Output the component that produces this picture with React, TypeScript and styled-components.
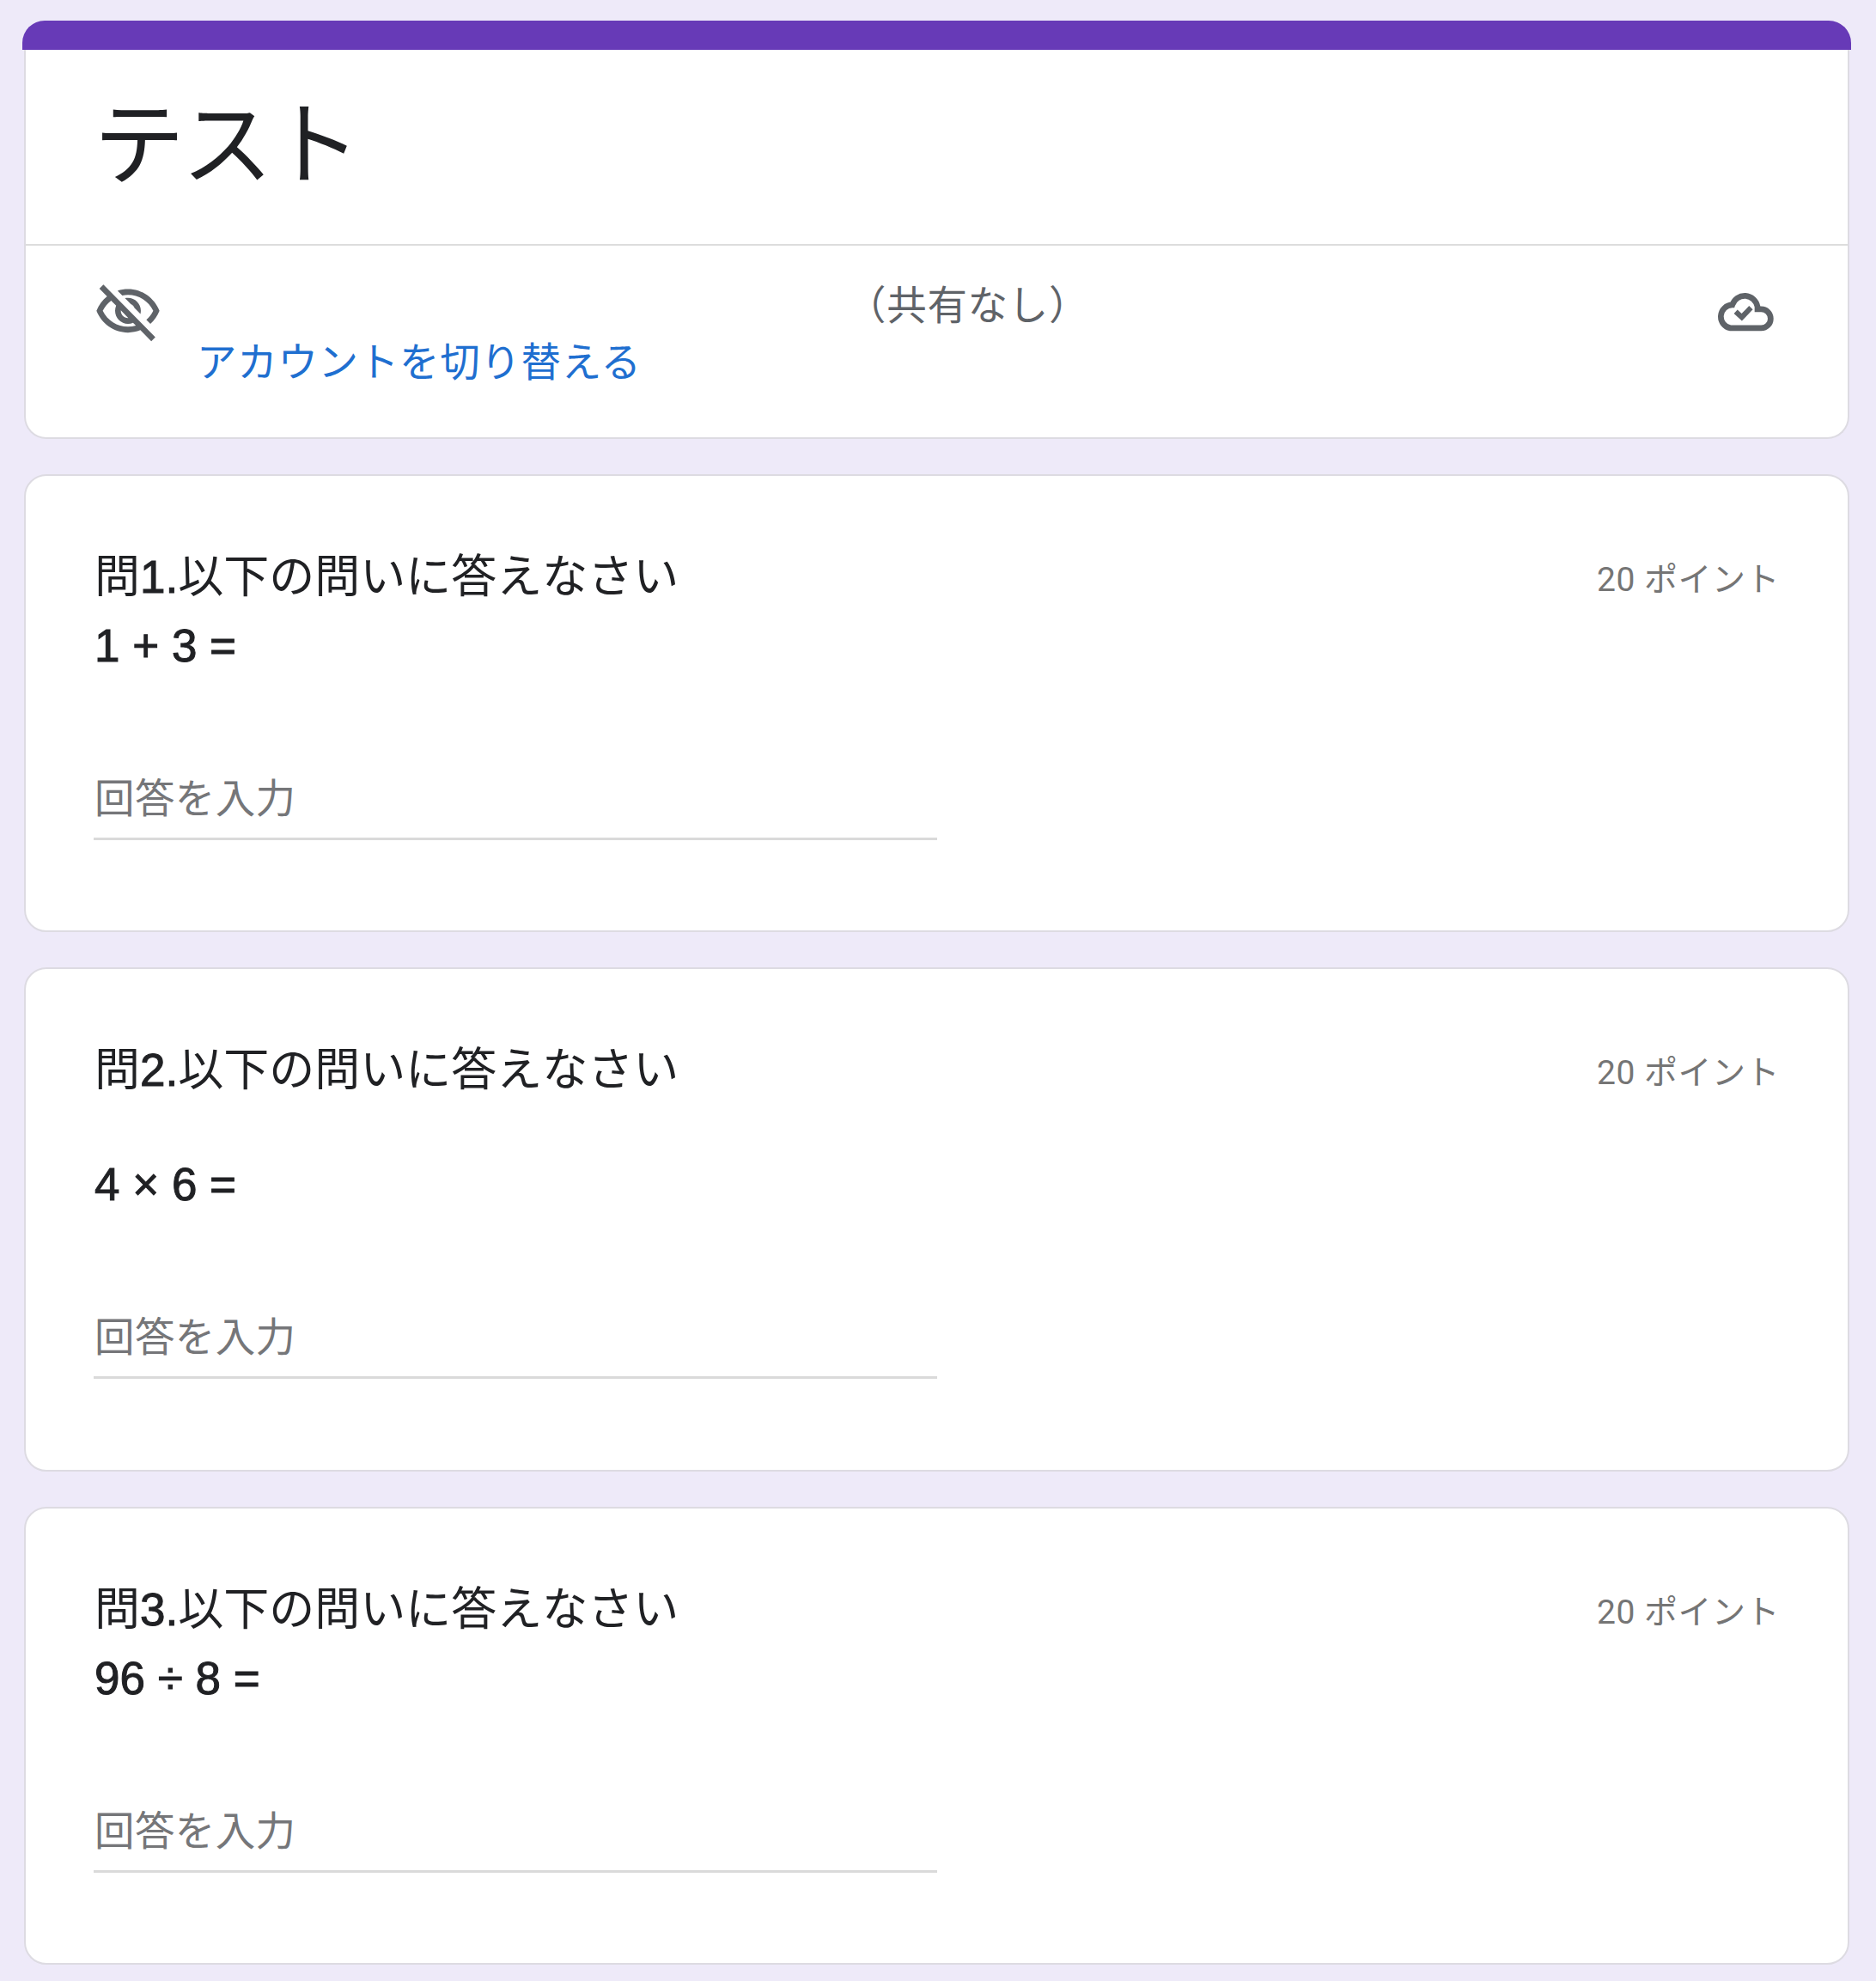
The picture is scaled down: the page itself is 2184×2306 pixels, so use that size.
import React from "react";
import styled, { createGlobalStyle } from "styled-components";

const GlobalStyle = createGlobalStyle`
  * { box-sizing: border-box; }
  body {
    margin: 0;
    background: #eeeaf9;
    color: #202124;
    font-family: "Liberation Sans", "Noto Sans CJK JP", sans-serif;
  }
`;

const Page = styled.main`
  display: flex;
  flex-direction: column;
  gap: 41px;
  height: 2306px;
  padding: 24px 31px 0 28px;
  overflow: hidden;
`;

const Card = styled.section<{ $height: number }>`
  flex: none;
  height: ${(p) => p.$height}px;
  background: #fff;
  border: 2px solid #dddbe2;
  border-radius: 26px;
`;

const HeaderCard = styled.header`
  flex: none;
  display: flex;
  flex-direction: column;
  height: 487px;
  background: #fff;
  border: 2px solid #dddbe2;
  border-top: 0;
  border-radius: 26px;
`;

const Accent = styled.div`
  flex: none;
  height: 34px;
  margin: 0 -4px;
  background: #673ab7;
  border-radius: 26px 26px 0 0;
`;

const TitleArea = styled.div`
  height: 228px;
  padding: 31px 80px 0 79px;
  border-bottom: 2px solid #dddddd;
`;

const Title = styled.h1`
  margin: 0;
  font-size: 106px;
  line-height: 160px;
  font-weight: 400;
  letter-spacing: -3.5px;
`;

const AccountRow = styled.div`
  display: flex;
  align-items: flex-start;
  padding: 37px 79px 0;
  color: #5f6368;
  font-size: 46.5px;
  line-height: 66px;
  letter-spacing: 0.7px;
`;

const AccountText = styled.div`
  flex: 1;
  display: flex;
  flex-direction: column;
  padding-left: 40px;
`;

const Shared = styled.span`
  padding-left: 756px;
`;

const SwitchLink = styled.a`
  color: #1f6fd0;
`;

const EyeIcon = styled.svg`
  flex: none;
  width: 80px;
  height: 81px;
`;

const CloudIcon = styled.svg`
  flex: none;
  width: 67px;
  height: 51px;
  margin: 13px 7px 0 0;
`;

const QuestionHead = styled.div`
  display: flex;
  justify-content: space-between;
  padding: 78px 79px 0 80px;
`;

const Question = styled.h2`
  display: flex;
  flex-direction: column;
  margin: 0;
  font-size: 53px;
  line-height: 80px;
  font-weight: 400;
`;

const Latin = styled.span`
  -webkit-text-stroke: 1px currentColor;
`;

const Formula = styled.span<{ $spaced?: boolean }>`
  margin-top: ${(p) => (p.$spaced ? 53 : 0)}px;
`;

const Points = styled.span`
  color: #757575;
  font-family: Roboto, "Noto Sans CJK JP", sans-serif;
  font-size: 39px;
  line-height: 86px;
  letter-spacing: 0.5px;
`;

const Answer = styled.input`
  display: block;
  width: 982px;
  height: 96px;
  margin: 90px 0 0 79px;
  padding: 2px 0 0 1px;
  border: 0;
  border-bottom: 3px solid #dadada;
  background: transparent;
  outline: 0;
  font: 46.5px "Liberation Sans", "Noto Sans CJK JP", sans-serif;
  letter-spacing: 0.4px;
  &::placeholder { color: #757679; opacity: 1; }
`;

const questions = [
  { number: "1.", formula: "1 + 3 =", height: 533 },
  { number: "2.", formula: "4 × 6 =", height: 587, spaced: true },
  { number: "3.", formula: "96 ÷ 8 =", height: 533 },
];

export default function App() {
  return (
    <Page>
      <GlobalStyle />
      <HeaderCard>
        <Accent />
        <TitleArea>
          <Title>テスト</Title>
        </TitleArea>
        <AccountRow>
          <EyeIcon viewBox="0 0 24 24" preserveAspectRatio="none" fill="currentColor" aria-hidden="true">
            <path d="M12 6c3.79 0 7.17 2.13 8.82 5.5-.59 1.22-1.42 2.27-2.41 3.12l1.41 1.41c1.39-1.23 2.49-2.77 3.18-4.53C21.27 7.11 17 4 12 4c-1.27 0-2.49.2-3.64.57l1.65 1.65C10.66 6.09 11.32 6 12 6zm-1.07 1.14L13 9.21c.57.25 1.03.71 1.28 1.28l2.07 2.07c.08-.34.14-.7.14-1.07C16.5 9.01 14.48 7 12 7c-.37 0-.72.05-1.07.14zM2.01 3.87l2.68 2.68C3.06 7.83 1.77 9.53 1 11.5 2.73 15.89 7 19 12 19c1.52 0 2.98-.29 4.32-.82l3.82 3.82 1.41-1.41L3.42 2.45 2.01 3.87zm7.5 7.5l2.61 2.61c-.04.01-.08.02-.12.02-1.38 0-2.5-1.12-2.5-2.5 0-.05.01-.08.01-.13zm-3.4-3.4l1.75 1.75c-.23.55-.36 1.15-.36 1.78 0 2.48 2.02 4.5 4.5 4.5.63 0 1.23-.13 1.77-.36l.98.98c-.88.24-1.8.38-2.75.38-3.79 0-7.17-2.13-8.82-5.5.7-1.43 1.72-2.61 2.93-3.53z" />
          </EyeIcon>
          <AccountText>
            <Shared>（共有なし）</Shared>
            <SwitchLink>アカウントを切り替える</SwitchLink>
          </AccountText>
          <CloudIcon viewBox="0 0 66 50" preserveAspectRatio="none" fill="none" stroke="currentColor" strokeWidth="6.6" aria-hidden="true">
            <path d="M16.3 45H51.6A10.8 10.8 0 0 0 51.6 23.4H47.3V20.5A15 15.4 0 0 0 18.4 18.6A13.3 13.3 0 0 0 16.3 45Z" />
            <path d="M22.3 26.2L29.3 32.6L39.8 21.8" strokeWidth="6" />
          </CloudIcon>
        </AccountRow>
      </HeaderCard>
      {questions.map((q) => (
        <Card key={q.number} $height={q.height}>
          <QuestionHead>
            <Question>
              <span>
                問<Latin>{q.number}</Latin>以下の問いに答えなさい
              </span>
              <Formula $spaced={q.spaced}>
                <Latin>{q.formula}</Latin>
              </Formula>
            </Question>
            <Points>20 ポイント</Points>
          </QuestionHead>
          <Answer placeholder="回答を入力" />
        </Card>
      ))}
    </Page>
  );
}
